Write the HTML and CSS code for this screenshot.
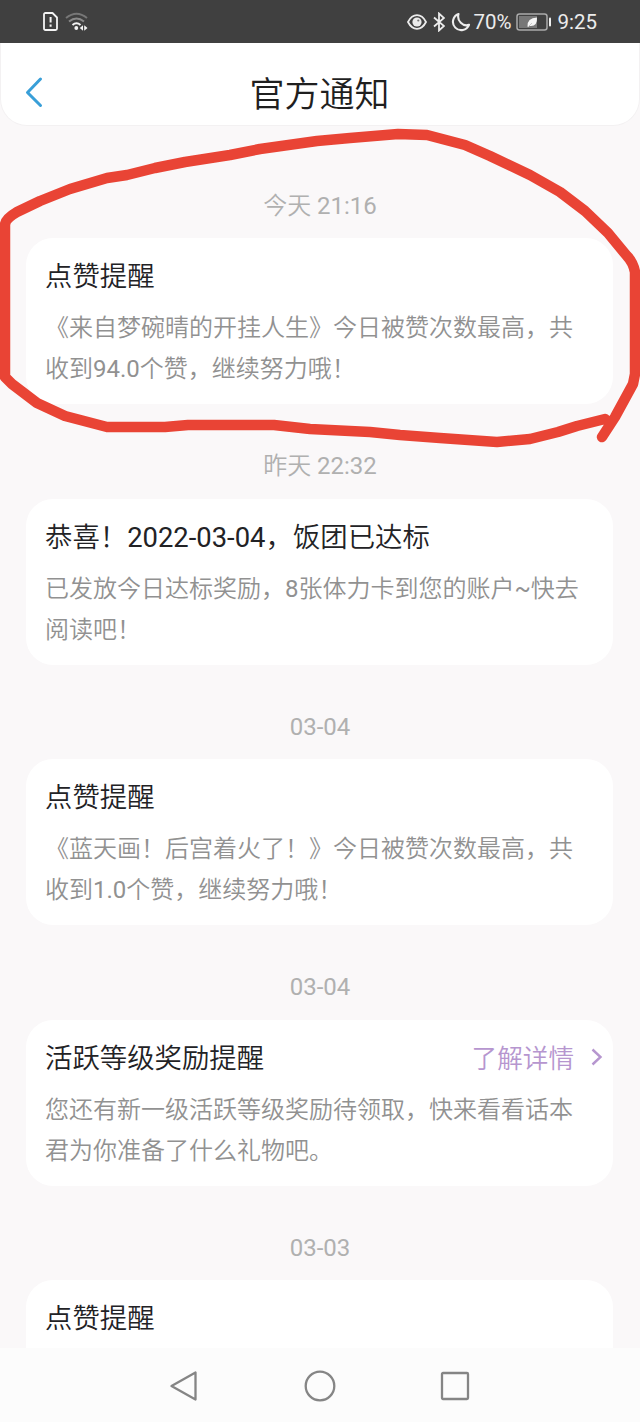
FILE: index.html
```
<!DOCTYPE html>
<html lang="zh-CN">
<head>
<meta charset="utf-8">
<title>官方通知</title>
<link rel="stylesheet" href="styles.css">
</head>
<body>
<div class="screen">
  <div class="status">
    <div class="status-left">
      <svg width="16" height="20" viewBox="0 0 16 20" fill="none" stroke="#f4f4f4" stroke-width="1.8" stroke-linejoin="round"><path d="M2.5 1H9.5L14 5.5V16.5Q14 18 12.5 18H2.5Q1 18 1 16.5V2.5Q1 1 2.5 1Z"/><path d="M7.6 5V10.5M7.6 12.5V14.8" stroke-width="2"/></svg>
      <svg width="24" height="20" viewBox="0 0 24 20" fill="none" stroke-width="2"><path d="M1 6Q11.5 -2.5 22 6" stroke="#777"/><path d="M4 9.5Q11.5 3.5 19 9.5" stroke="#8a8a8a"/><path d="M7.5 13Q11.5 9.5 15.5 13" stroke="#f4f4f4"/><circle cx="11.3" cy="16" r="1.9" fill="#f4f4f4"/><path d="M18 13.3V18.7L14.8 16ZM19.2 13.3V18.7L22.5 16Z" fill="#f4f4f4"/></svg>
    </div>
    <div class="status-right">
      <svg class="eye" width="20" height="16" viewBox="0 0 20 16" fill="none" stroke="#ececec" stroke-width="1.8"><path d="M1 8Q4.5 1.2 10 1.2T19 8Q15.5 14.8 10 14.8T1 8Z"/><circle cx="10" cy="8" r="4.6" fill="#ececec" stroke="none"/><circle cx="11.3" cy="6.5" r="1.1" fill="#777" stroke="none"/></svg>
      <svg class="bluetooth" width="12" height="20" viewBox="0 0 12 20" fill="none" stroke="#ececec" stroke-width="1.8"><path d="M1 5.5L11 14L6 18.5V1.5L11 6L1 14.5"/></svg>
      <svg class="moon" width="20" height="20" viewBox="0 0 20 20" fill="none" stroke="#ececec" stroke-width="2.1" stroke-linejoin="round"><path d="M7.500 2A8.300 8.300 0 1 0 18 12.800Q13.500 14.500 9.800 10.800T7.500 2Z"/></svg>
      <span class="percent">70%</span>
      <svg class="battery" width="36" height="18" viewBox="0 0 36 18"><rect x="1" y="1" width="30" height="16" rx="2.5" fill="none" stroke="#a9a9a9" stroke-width="1.5"/><rect x="3" y="3" width="18" height="12" fill="#777"/><path d="M11.5 13.5Q11 5 21 4.500Q21.500 14 13.500 13L12 14Z" fill="#f5f5f5"/><path d="M13 13L16 10" stroke="#aaa" stroke-width=".6"/><rect x="33" y="4.500" width="2" height="9" rx="1" fill="#f0f0f0"/></svg>
      <span class="clock">9:25</span>
    </div>
  </div>
  <header class="header">
    <svg class="back" width="18" height="32" viewBox="0 0 18 32" fill="none" stroke="#399fd8" stroke-width="3" stroke-linecap="round" stroke-linejoin="round"><path d="M15.500 3L2.500 16.500L15.500 29.500"/></svg>
    <h1 class="heading">官方通知</h1>
  </header>
  <main class="feed">
    <time class="date">今天 <span class="num">21:16</span></time>
    <section class="card"><h2 class="title">点赞提醒</h2><p class="message">《来自梦碗晴的开挂人生》今日被赞次数最高，共<br>收到<span class="num">94.0</span>个赞，继续努力哦！</p></section>
    <time class="date">昨天 <span class="num">22:32</span></time>
    <section class="card"><h2 class="title">恭喜！<span class="num">2022-03-04</span>，饭团已达标</h2><p class="message">已发放今日达标奖励，<span class="num">8</span>张体力卡到您的账户<span class="num">~</span>快去<br>阅读吧！</p></section>
    <time class="date"><span class="num">03-04</span></time>
    <section class="card"><h2 class="title">点赞提醒</h2><p class="message">《蓝天画！后宫着火了！》今日被赞次数最高，共<br>收到<span class="num">1.0</span>个赞，继续努力哦！</p></section>
    <time class="date"><span class="num">03-04</span></time>
    <section class="card"><div class="title-row"><h2 class="title">活跃等级奖励提醒</h2><a class="more">了解详情<svg class="chevron" width="12" height="20" viewBox="0 0 12 20" fill="none" stroke="#b696cf" stroke-width="2.4"><path d="M1.500 2.500L9.500 10L1.500 17.500"/></svg></a></div><p class="message">您还有新一级活跃等级奖励待领取，快来看看话本<br>君为你准备了什么礼物吧。</p></section>
    <time class="date"><span class="num">03-03</span></time>
    <section class="card"><h2 class="title">点赞提醒</h2></section>
  </main>
  <nav class="nav">
    <svg width="32" height="32" viewBox="0 0 32 32"><path d="M26.500 2.500V29.500L2.500 16Z"/></svg>
    <svg width="32" height="32" viewBox="0 0 32 32"><circle cx="16" cy="16" r="14.300"/></svg>
    <svg width="32" height="32" viewBox="0 0 32 32"><rect x="3" y="3" width="26" height="26" rx="1"/></svg>
  </nav>
  <svg class="marker" width="640" height="330" viewBox="0 120 640 330"><path d="M602 437L615 417L633 384L635 374V272Q633 262 627 256L608 233L585 211L560 192L530 175L490 156L465 145L427 135L398 134L350 138L317 141L260 149L230 155L185 162L155 168L127 175L107 178L70 189L40 201L17 212Q5 219 5 225V377L12 384L37 403L65 416L107 427L130 427L165 427L188 425H274L310 429L370 432L400 435L440 438L497 442L530 439L558 432L577 426L605 419"/></svg>
</div>
</body>
</html>
```
FILE: styles.css
```
* { box-sizing: border-box; }
body { margin: 0; font-family: Roboto, "Noto Sans CJK SC", sans-serif; }
.screen { position: relative; width: 640px; height: 1422px; display: flex; flex-direction: column; overflow: hidden; background: #faf8f9; }
.status { flex: none; height: 43px; padding: 1px 43px 0; display: flex; justify-content: space-between; align-items: center; background: #404040; color: #ececec; font-size: 20.500px; }
.status-left, .status-right { display: flex; align-items: center; }
.status-left { gap: 6px; }
.bluetooth { margin-left: 6px; }
.moon { margin-left: 6px; }
.percent { margin-left: 2px; }
.battery { margin-left: 5px; }
.clock { margin-left: 5px; }
.header { flex: none; height: 83px; padding: 4px 25px 0 24px; display: grid; grid-template-columns: 18px 1fr 18px; align-items: center; border-radius: 0 0 27px 27px; border: 1px solid #f3f1f2; border-top: 0; background: #fff; }
.back { margin-top: 12px; }
.heading { margin: 20px 0 0; text-align: center; font-size: 35px; line-height: 44px; font-weight: 350; color: #1f1f1f; }
.num { font-weight: 400; }
.feed { flex: 1; min-height: 0; overflow: hidden; padding: 65px 27px 0 26px; display: flex; flex-direction: column; }
.date { flex: none; height: 30px; margin-bottom: 17.400px; padding-left: 1px; text-align: center; font-size: 24px; line-height: 30px; font-weight: 350; color: #b0b0b0; }
.card { flex: none; height: 166px; margin-bottom: 47px; padding: 18px 10px 0 19px; border-radius: 27px; background: #fff; }
.title-row { display: flex; justify-content: space-between; }
.title { margin: 0; font-size: 27.400px; line-height: 42px; font-weight: 350; color: #222225; white-space: nowrap; }
.more { display: flex; align-items: center; gap: 17px; font-size: 25.600px; line-height: 42px; font-weight: 350; color: #b696cf; }
.chevron { margin-top: -4px; }
.message { margin: 10px 0 0; font-size: 24px; line-height: 41px; font-weight: 350; color: #919191; white-space: nowrap; }
.nav { flex: none; height: 74px; padding: 1px 169px 0; display: flex; justify-content: space-between; align-items: center; background: #fcfcfc; }
.nav svg { fill: none; stroke: #858585; stroke-width: 2.300; stroke-linejoin: round; }
.marker { position: absolute; left: 0; top: 120px; fill: none; stroke: #e94435; stroke-width: 10.500; stroke-linecap: round; stroke-linejoin: round; pointer-events: none; }
```
